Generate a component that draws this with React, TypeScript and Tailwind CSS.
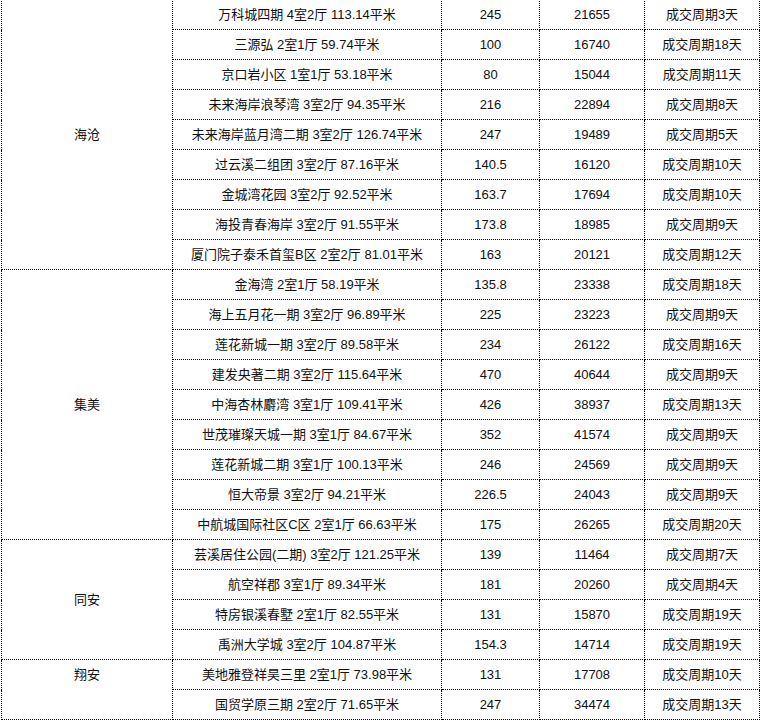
type Row = { name: string; price: string; unit: string; days: string };

const groups: { district: string; rows: Row[] }[] = [
  {
    district: "海沧",
    rows: [
      { name: "万科城四期 4室2厅 113.14平米", price: "245", unit: "21655", days: "成交周期3天" },
      { name: "三源弘 2室1厅 59.74平米", price: "100", unit: "16740", days: "成交周期18天" },
      { name: "京口岩小区 1室1厅 53.18平米", price: "80", unit: "15044", days: "成交周期11天" },
      { name: "未来海岸浪琴湾 3室2厅 94.35平米", price: "216", unit: "22894", days: "成交周期8天" },
      { name: "未来海岸蓝月湾二期 3室2厅 126.74平米", price: "247", unit: "19489", days: "成交周期5天" },
      { name: "过云溪二组团 3室2厅 87.16平米", price: "140.5", unit: "16120", days: "成交周期10天" },
      { name: "金城湾花园 3室2厅 92.52平米", price: "163.7", unit: "17694", days: "成交周期10天" },
      { name: "海投青春海岸 3室2厅 91.55平米", price: "173.8", unit: "18985", days: "成交周期9天" },
      { name: "厦门院子泰禾首玺B区 2室2厅 81.01平米", price: "163", unit: "20121", days: "成交周期12天" },
    ],
  },
  {
    district: "集美",
    rows: [
      { name: "金海湾 2室1厅 58.19平米", price: "135.8", unit: "23338", days: "成交周期18天" },
      { name: "海上五月花一期 3室2厅 96.89平米", price: "225", unit: "23223", days: "成交周期9天" },
      { name: "莲花新城一期 3室2厅 89.58平米", price: "234", unit: "26122", days: "成交周期16天" },
      { name: "建发央著二期 3室2厅 115.64平米", price: "470", unit: "40644", days: "成交周期9天" },
      { name: "中海杏林麝湾 3室1厅 109.41平米", price: "426", unit: "38937", days: "成交周期13天" },
      { name: "世茂璀璨天城一期 3室1厅 84.67平米", price: "352", unit: "41574", days: "成交周期9天" },
      { name: "莲花新城二期 3室1厅 100.13平米", price: "246", unit: "24569", days: "成交周期9天" },
      { name: "恒大帝景 3室2厅 94.21平米", price: "226.5", unit: "24043", days: "成交周期9天" },
      { name: "中航城国际社区C区 2室1厅 66.63平米", price: "175", unit: "26265", days: "成交周期20天" },
    ],
  },
  {
    district: "同安",
    rows: [
      { name: "芸溪居住公园(二期) 3室2厅 121.25平米", price: "139", unit: "11464", days: "成交周期7天" },
      { name: "航空祥郡 3室1厅 89.34平米", price: "181", unit: "20260", days: "成交周期4天" },
      { name: "特房银溪春墅 2室1厅 82.55平米", price: "131", unit: "15870", days: "成交周期19天" },
      { name: "禹洲大学城 3室2厅 104.87平米", price: "154.3", unit: "14714", days: "成交周期19天" },
    ],
  },
  {
    district: "翔安",
    rows: [
      { name: "美地雅登祥昊三里 2室1厅 73.98平米", price: "131", unit: "17708", days: "成交周期10天" },
      { name: "国贸学原三期 2室2厅 71.65平米", price: "247", unit: "34474", days: "成交周期13天" },
    ],
  },
];

const cell = "border border-dotted border-black h-[30px] p-0 text-center align-middle whitespace-nowrap";

export default function App() {
  return (
    <div className="w-[760px] h-[720px] overflow-hidden bg-white">
      <table
        className="ml-[1px] -mt-[1px] border-collapse table-fixed w-[758px] text-[13px] text-[#111] leading-none"
        style={{ fontFamily: '"Liberation Sans", "Noto Sans CJK SC", sans-serif' }}
      >
        <colgroup>
          <col className="w-[171px]" />
          <col className="w-[269px]" />
          <col className="w-[98px]" />
          <col className="w-[105px]" />
          <col className="w-[115px]" />
        </colgroup>
        <tbody>
          {groups.map((g) =>
            g.rows.map((r, i) => (
              <tr key={r.name}>
                {i === 0 && (
                  <td
                    rowSpan={g.rows.length}
                    className={`${cell} ${g.district === "翔安" ? "!align-top pt-[8px]" : ""}`}
                  >
                    {g.district}
                  </td>
                )}
                <td className={cell}>{r.name}</td>
                <td className={cell}>{r.price}</td>
                <td className={cell}>{r.unit}</td>
                <td className={cell}>{r.days}</td>
              </tr>
            ))
          )}
        </tbody>
      </table>
    </div>
  );
}
